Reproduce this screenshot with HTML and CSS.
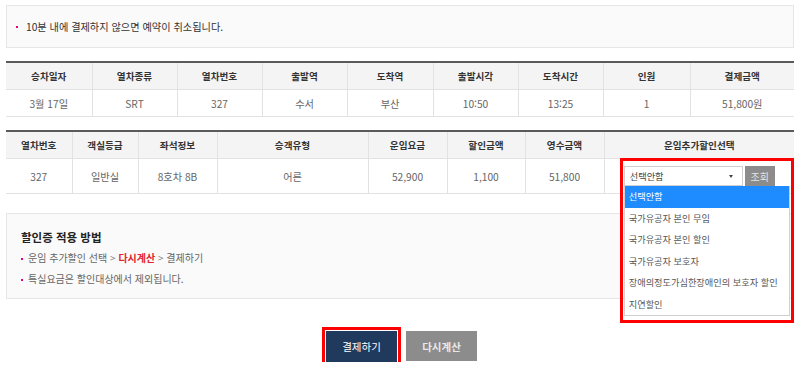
FILE: index.html
```html
<!DOCTYPE html>
<html lang="ko">
<head>
    <meta charset="UTF-8">
    <title>결제하기</title>
    <link rel="stylesheet" href="styles.css">
</head>
<body>
    <div class="wrap">
        <div class="notice">
            <span class="dot"></span>10분 내에 결제하지 않으면 예약이 취소됩니다.
        </div>

        <table class="grid trip">
            <colgroup>
                <col style="width:86px"><col style="width:85px"><col style="width:85px"><col style="width:85px"><col style="width:86px"><col style="width:85px"><col style="width:85px"><col style="width:87px"><col style="width:104px">
            </colgroup>
            <tr>
                <th>승차일자</th><th>열차종류</th><th>열차번호</th><th>출발역</th><th>도착역</th><th>출발시각</th><th>도착시간</th><th>인원</th><th>결제금액</th>
            </tr>
            <tr>
                <td>3월 17일</td><td>SRT</td><td>327</td><td>수서</td><td>부산</td><td>10:50</td><td>13:25</td><td>1</td><td>51,800원</td>
            </tr>
        </table>

        <table class="grid fare">
            <colgroup>
                <col style="width:66px"><col style="width:66px"><col style="width:79px"><col style="width:151px"><col style="width:79px"><col style="width:78px"><col style="width:79px"><col style="width:190px">
            </colgroup>
            <tr>
                <th>열차번호</th><th>객실등급</th><th>좌석정보</th><th>승객유형</th><th>운임요금</th><th>할인금액</th><th>영수금액</th><th>운임추가할인선택</th>
            </tr>
            <tr>
                <td>327</td><td>일반실</td><td>8호차 8B</td><td>어른</td><td>52,900</td><td>1,100</td><td>51,800</td>
                <td>
                    <div class="pick">
                        <div class="select">선택안함<span class="caret"></span></div>
                        <button class="btn-look">조회</button>
                        <ul class="options">
                            <li class="on">선택안함</li>
                            <li>국가유공자 본인 무임</li>
                            <li>국가유공자 본인 할인</li>
                            <li>국가유공자 보호자</li>
                            <li>장애의정도가심한장애인의 보호자 할인</li>
                            <li>지연할인</li>
                        </ul>
                        <div class="mark pick-mark"></div>
                    </div>
                </td>
            </tr>
        </table>

        <div class="guide">
            <h3>할인증 적용 방법</h3>
            <p><span class="dot"></span>운임 추가할인 선택 <span class="gt">&gt;</span> <strong>다시계산</strong> <span class="gt">&gt;</span> 결제하기</p>
            <p><span class="dot"></span>특실요금은 할인대상에서 제외됩니다.</p>
        </div>

        <div class="actions">
            <button class="btn pay">결제하기</button>
            <button class="btn recalc">다시계산</button>
        </div>
    </div>
</body>
</html>
```

FILE: styles.css
```css
body {
    margin: 0;
    padding: 5px 6px 0;
    background: #fff;
    color: #333;
    font-family: "Noto Sans CJK KR", "Noto Sans", sans-serif;
    font-size: 10px;
}
.wrap {
    width: 788px;
}
.dot {
    display: inline-block;
    width: 2px;
    height: 2px;
    background: #e4007f;
    margin-right: 8px;
    vertical-align: middle;
}
.notice {
    height: 41px;
    border: 1px solid #e6e6e6;
    background: #fafafa;
    padding-left: 9px;
    display: flex;
    align-items: center;
    font-size: 10.2px;
    color: #333;
}

/* tables */
.grid {
    width: 788px;
    table-layout: fixed;
    border-collapse: collapse;
    border-top: 2px solid #5a5a5a;
}
.trip {
    margin-top: 13px;
}
.fare {
    margin-top: 13px;
}
.grid th,
.grid td {
    padding: 0;
    text-align: center;
    border-bottom: 1px solid #e2e2e2;
    border-left: 1px solid #e2e2e2;
    white-space: nowrap;
}
.grid th:first-child,
.grid td:first-child {
    border-left: 0;
}
.grid th {
    height: 26px;
    background: #f4f4f4;
    color: #333;
    font-weight: 700;
    font-size: 9.6px;
}
.grid td {
    height: 26px;
    color: #666;
    font-size: 10.2px;
}
.fare td {
    height: 34px;
}

/* fare discount picker */
.pick {
    position: relative;
    display: inline-flex;
    gap: 2px;
    vertical-align: middle;
    text-align: left;
}
.select {
    position: relative;
    width: 112px;
    height: 18px;
    border: 1px solid #cfcfcf;
    background: #fff;
    color: #444;
    font-size: 9.2px;
    line-height: 18px;
    padding-left: 5px;
}
.caret {
    position: absolute;
    right: 9px;
    top: 8px;
    border-left: 2.5px solid transparent;
    border-right: 2.5px solid transparent;
    border-top: 3px solid #444;
}
.btn-look {
    width: 30px;
    height: 20px;
    border: 0;
    padding: 0;
    background: #8c8c8c;
    color: #e6e6e6;
    font-family: inherit;
    font-size: 10px;
}
.options {
    position: absolute;
    left: 0;
    top: 20px;
    width: 164px;
    margin: 0;
    padding: 0;
    list-style: none;
    background: #fff;
    border: 1px solid #d0d0d0;
    border-top: 0;
    z-index: 2;
}
.options li {
    height: 21.5px;
    line-height: 21.5px;
    padding-left: 4px;
    color: #555;
    font-size: 9.2px;
}
.options li.on {
    background: #1e8cff;
    color: #fff;
}
.mark {
    position: absolute;
    border: 3px solid #ff0000;
    pointer-events: none;
    z-index: 3;
}
.pick-mark {
    left: -4px;
    top: -8px;
    width: 168px;
    height: 159px;
}

/* guide box */
.guide {
    margin-top: 19px;
    border: 1px solid #e6e6e6;
    background: #fafafa;
    padding: 15px 0 0 14px;
    height: 69px;
}
.guide h3 {
    margin: 0 0 3px;
    font-size: 11.5px;
    font-weight: 700;
    color: #222;
    line-height: 16px;
}
.guide p {
    margin: 0;
    line-height: 20.5px;
    color: #666;
    font-size: 10px;
}
.guide .dot {
    margin-right: 5px;
}
.guide strong {
    color: #e3242b;
}
.gt {
    color: #888;
}

/* buttons */
.actions {
    margin-top: 32px;
    display: flex;
    justify-content: center;
    gap: 9px;
    padding-left: 3px;
}
.btn {
    width: 71px;
    height: 31px;
    border: 0;
    padding: 0;
    font-family: inherit;
    font-size: 10.5px;
}
.pay {
    background: #1f3a5c;
    color: #fff;
    outline: 3px solid #ff0000;
    outline-offset: 1px;
}
.recalc {
    background: #8c8c8c;
    color: #e8e8e8;
    font-weight: 700;
    height: 30px;
}
```
